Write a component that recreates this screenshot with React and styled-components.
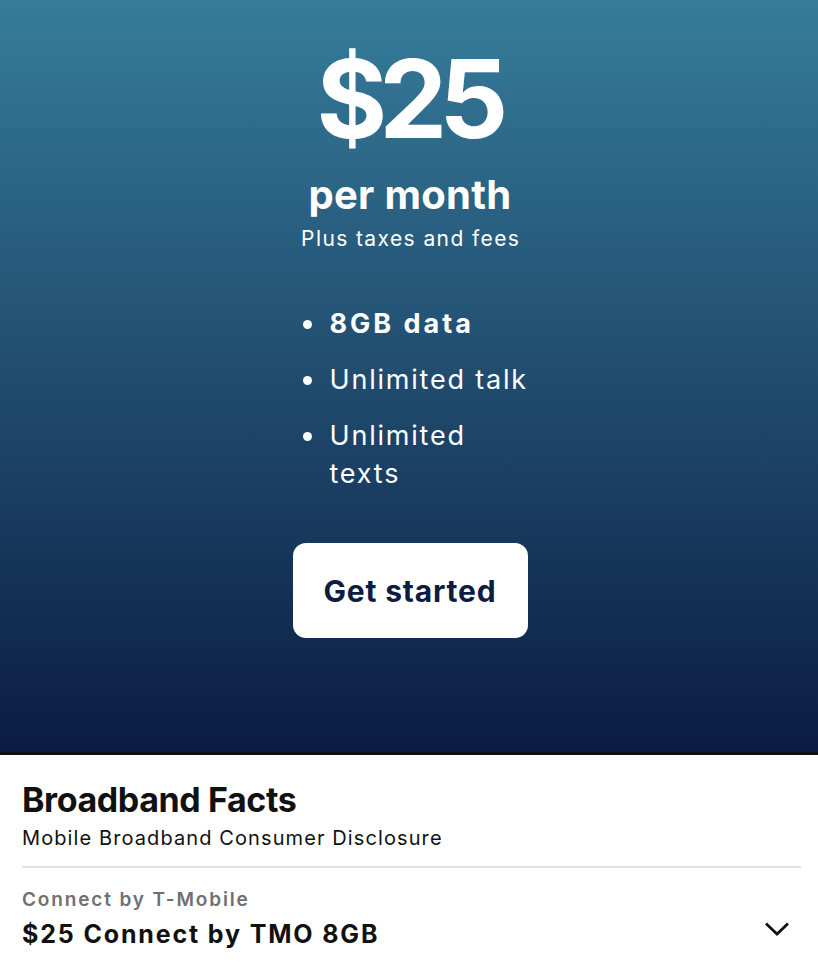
import React from "react";
import styled, { createGlobalStyle } from "styled-components";

const Global = createGlobalStyle`
  html, body { margin: 0; padding: 0; background: #ffffff; }
  body { font-family: Inter, "Noto Sans", "Liberation Sans", sans-serif; -webkit-font-smoothing: antialiased; }
  * { box-sizing: border-box; }
`;

const Page = styled.div`
  width: 818px;
  min-height: 964px;
  display: flex;
  flex-direction: column;
  background: #ffffff;
`;

const Hero = styled.section`
  height: 755px;
  flex-shrink: 0;
  padding: 43px 0 0 2px;
  display: flex;
  flex-direction: column;
  align-items: center;
  color: #ffffff;
  background: linear-gradient(180deg, #367c9b 0%, #0b1c42 100%);
  border-bottom: 3px solid #111111;
`;

const Price = styled.div`
  font-size: 108px;
  line-height: 112px;
  font-weight: 700;
  letter-spacing: -8px;
  margin-right: 3px;
`;

const Period = styled.div`
  margin-top: 16px;
  font-size: 40px;
  line-height: 48px;
  font-weight: 700;
  letter-spacing: 0.3px;
`;

const Note = styled.div`
  margin-top: 6px;
  font-size: 21px;
  line-height: 28px;
  font-weight: 400;
  letter-spacing: 1.4px;
  margin-right: -1.4px;
`;

const List = styled.ul`
  list-style: none;
  margin: 52px 0 0;
  padding: 0;
  width: 237px;
  display: flex;
  flex-direction: column;
  gap: 18px;
  transform: translateX(2px);
`;

const Item = styled.li`
  display: grid;
  grid-template-columns: 36px 1fr;
  font-size: 27px;
  line-height: 38px;
  font-weight: ${(p) => (p.$bold ? 700 : 400)};
  letter-spacing: ${(p) => (p.$bold ? "3px" : "1.8px")};
`;

const Dot = styled.span`
  width: 9px;
  height: 9px;
  border-radius: 50%;
  background: #ffffff;
  margin: 15px 0 0 9px;
`;

const CTA = styled.button`
  margin-top: 50px;
  width: 235px;
  height: 95px;
  border: none;
  border-radius: 13px;
  background: #ffffff;
  color: #0c1c42;
  font-family: inherit;
  font-size: 30px;
  font-weight: 700;
  letter-spacing: 0.8px;
  cursor: pointer;
`;

const Facts = styled.section`
  padding: 25px 17px 0 22px;
  display: flex;
  flex-direction: column;
`;

const FactsTitle = styled.h2`
  margin: 0;
  font-size: 34px;
  line-height: 40px;
  font-weight: 700;
  letter-spacing: -0.4px;
  color: #111111;
`;

const FactsSub = styled.div`
  margin-top: 4px;
  font-size: 20px;
  line-height: 28px;
  letter-spacing: 1.1px;
  color: #111111;
`;

const Divider = styled.hr`
  margin: 14px 0 0;
  border: none;
  height: 2px;
  background: #e2e2e2;
`;

const PlanRow = styled.div`
  margin-top: 19px;
  display: flex;
  align-items: flex-end;
  justify-content: space-between;
`;

const PlanText = styled.div`
  display: flex;
  flex-direction: column;
  gap: 5px;
`;

const Provider = styled.div`
  font-size: 19px;
  line-height: 26px;
  font-weight: 600;
  letter-spacing: 1.85px;
  color: #707070;
`;

const PlanName = styled.div`
  font-size: 25px;
  line-height: 32px;
  font-weight: 700;
  letter-spacing: 1.85px;
  color: #111111;
`;

const Chevron = styled.svg`
  width: 24px;
  height: 15px;
  margin: 0 12px 13px 0;
`;

export default function App() {
  return (
    <Page>
      <Global />
      <Hero>
        <Price>$25</Price>
        <Period>per month</Period>
        <Note>Plus taxes and fees</Note>
        <List>
          <Item $bold>
            <Dot />
            <span>8GB data</span>
          </Item>
          <Item>
            <Dot />
            <span>Unlimited talk</span>
          </Item>
          <Item>
            <Dot />
            <span>Unlimited texts</span>
          </Item>
        </List>
        <CTA>Get started</CTA>
      </Hero>
      <Facts>
        <FactsTitle>Broadband Facts</FactsTitle>
        <FactsSub>Mobile Broadband Consumer Disclosure</FactsSub>
        <Divider />
        <PlanRow>
          <PlanText>
            <Provider>Connect by T-Mobile</Provider>
            <PlanName>$25 Connect by TMO 8GB</PlanName>
          </PlanText>
          <Chevron viewBox="0 0 24 15" fill="none">
            <path d="M2 2.5 L12 12 L22 2.5" stroke="#111111" strokeWidth="2.8" strokeLinecap="square" />
          </Chevron>
        </PlanRow>
      </Facts>
    </Page>
  );
}
